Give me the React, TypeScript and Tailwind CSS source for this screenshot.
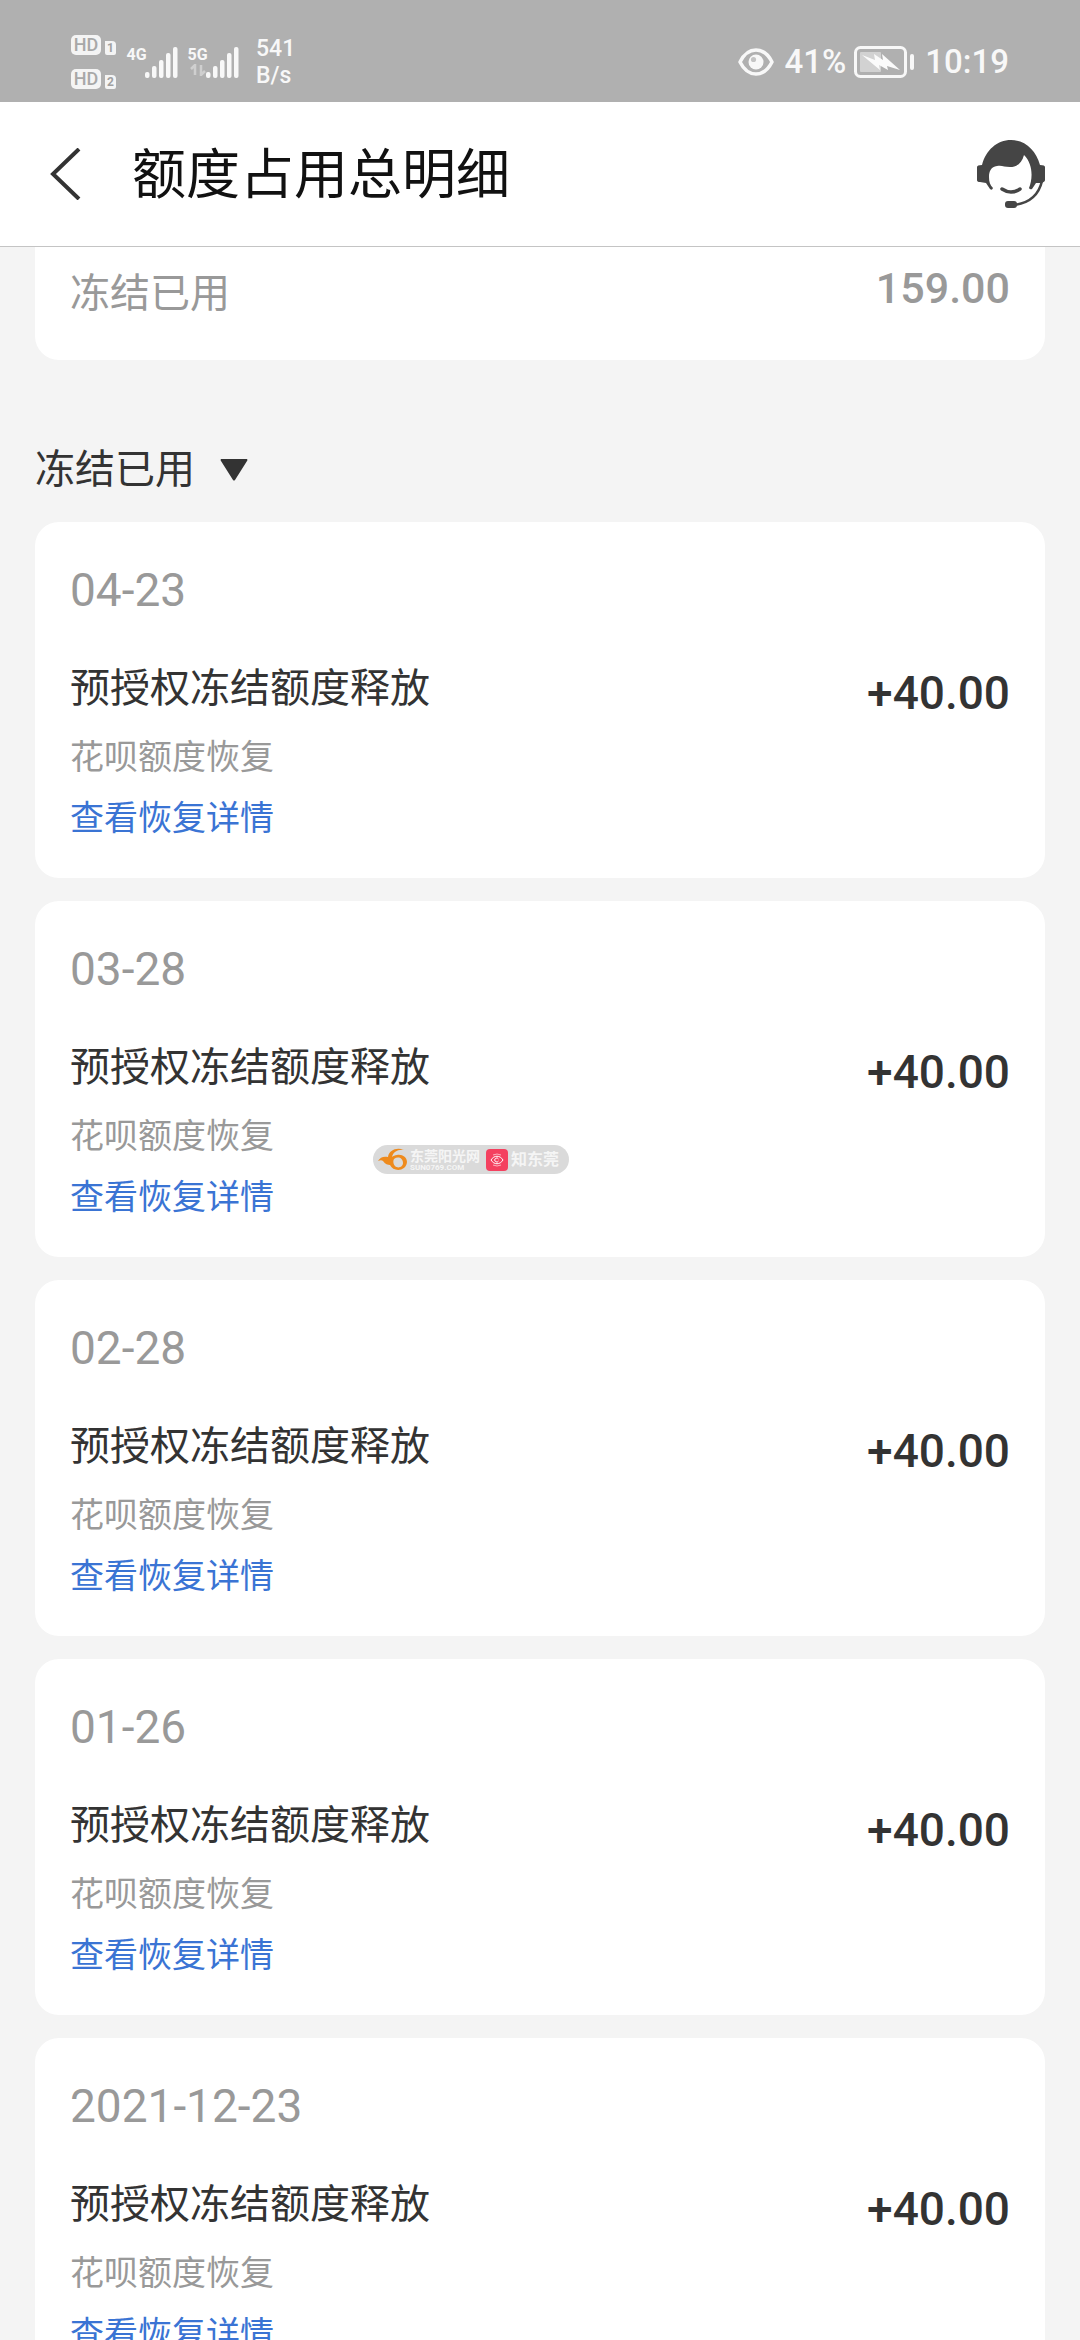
import { useState } from 'react';

type QuotaRecord = { date: string; title: string; note: string; amount: string };

const records: QuotaRecord[] = [
  { date: '04-23', title: '预授权冻结额度释放', note: '花呗额度恢复', amount: '+40.00' },
  { date: '03-28', title: '预授权冻结额度释放', note: '花呗额度恢复', amount: '+40.00' },
  { date: '02-28', title: '预授权冻结额度释放', note: '花呗额度恢复', amount: '+40.00' },
  { date: '01-26', title: '预授权冻结额度释放', note: '花呗额度恢复', amount: '+40.00' },
  { date: '2021-12-23', title: '预授权冻结额度释放', note: '花呗额度恢复', amount: '+40.00' },
];

function HdBadge({ sim }: { sim: string }) {
  return (
    <div className="flex items-end gap-1">
      <span className="flex h-5 w-[30px] items-center justify-center rounded-[5px] bg-[#f4f4f4] text-[18px] leading-5 font-medium text-[#a8a8a8]">
        HD
      </span>
      <span className="flex h-[14px] w-[11px] items-center justify-center rounded-tr-[4px] rounded-b-[2px] bg-[#f4f4f4] text-[12px] leading-[14px] font-bold text-[#a0a0a0]">
        {sim}
      </span>
    </div>
  );
}

function Signal({ label, idle }: { label: string; idle?: boolean }) {
  return (
    <div className="flex h-8 items-start">
      <div className="flex w-[17px] flex-col items-center">
        <span className="text-[16px] leading-[18px] font-bold">{label}</span>
        {idle && (
          <svg className="h-3 w-4 opacity-40" viewBox="0 0 16 12" fill="none" stroke="#fff" strokeWidth="2.5">
            <path d="M1 5 5 1v10M11 1v10l4-4" />
          </svg>
        )}
      </div>
      <svg className="h-8 w-[34px]" viewBox="0 0 34 32" fill="#f8f8f8">
        <rect x="0" y="26" width="4.5" height="6" rx="2" />
        <rect x="7" y="20" width="4.5" height="12" rx="2" />
        <rect x="14" y="14" width="4.5" height="18" rx="2" />
        <rect x="21" y="7" width="4.5" height="25" rx="2" />
        <rect x="28" y="1" width="4.5" height="31" rx="2" />
      </svg>
    </div>
  );
}

function StatusBar() {
  return (
    <div className="flex h-[102px] shrink-0 items-center justify-between bg-[#b0b0b0] pt-[22px] pr-[71px] pl-[71px] text-[#f8f8f8]">
      <div className="flex items-center">
        <div className="flex flex-col gap-[14px]">
          <HdBadge sim="1" />
          <HdBadge sim="2" />
        </div>
        <div className="ml-3 flex gap-[10px]">
          <Signal label="4G" />
          <Signal label="5G" idle />
        </div>
        <div className="ml-4 text-[23px] leading-[27px] font-medium">
          <p>541</p>
          <p>B/s</p>
        </div>
      </div>

      <div className="flex items-center text-[33px] leading-10 font-medium">
        <svg className="mr-[10px] h-7 w-9" viewBox="0 0 36 28" fill="none">
          <path d="M2 14C6 6 12 2 18 2s12 4 16 12c-4 8-10 12-16 12S6 22 2 14Z" stroke="#f8f8f8" strokeWidth="3.5" strokeLinejoin="round" />
          <circle cx="18" cy="14" r="7.5" fill="#f8f8f8" />
          <circle cx="15.5" cy="11.5" r="2.6" fill="#c4c4c4" />
        </svg>
        <span>41%</span>
        <svg className="ml-2 mr-[10px] h-8 w-[61px]" viewBox="0 0 61 32" fill="none">
          <rect x="1.5" y="1.5" width="50" height="29" rx="5" stroke="#f8f8f8" strokeWidth="3" />
          <rect x="6" y="6" width="21" height="20" rx="1" fill="#d2d2d2" />
          <path d="M8 9 21 14 20 8 29 14 28 8 46 24 33 20 34 24 25 19 26 24Z" fill="#fbfbfb" />
          <rect x="56" y="8" width="4" height="16" rx="2" fill="#f8f8f8" />
        </svg>
        <span>10:19</span>
      </div>
    </div>
  );
}

function HeadsetIcon() {
  return (
    <svg className="size-[68px]" viewBox="0 0 68 68" fill="none">
      <path
        d="M0 27q0-2 5-2C9 10 20 0 34 0s25 10 29 25q5 0 5 2v13q0 2-4 3l-5 0-4 6q-2 1-3-1c4-10 4-24-5-33-2 8-7 12-14 12-6 0-8-2-13-1-6 1-8 5-8 11 0 5 1 8 4 11q-1 3-3 1l-4-6-6-1q-3 0-3-2V27Z"
        fill="#454545"
      />
      <path d="M25 49q9 6 18 0" stroke="#454545" strokeWidth="3.5" strokeLinecap="round" />
      <path d="M65 41C62 54 53 63 37 65" stroke="#454545" strokeWidth="2.5" />
      <rect x="28" y="61" width="12" height="7" rx="3" fill="#454545" />
    </svg>
  );
}

function Watermark() {
  return (
    <div className="pointer-events-none absolute top-[1145px] left-[373px] flex h-[29px] items-center rounded-full bg-[#dadada] pr-[10px] pl-[5px] text-[#f5f5f5]">
      <svg className="h-6 w-[30px]" viewBox="0 0 30 24" fill="none">
        <path
          fillRule="evenodd"
          d="M26 2C19-1 11 2 10 9 6 8 2 9 0 13c2-1 4-1 5 0 2 3 5 4 7 4 3 7 16 7 17-3 0-5-5-8-10-7-2 0-4 1-5 2 1-5 6-8 12-7ZM16 11c4-3 9-1 9 4 0 4-5 6-8 3-2-2-2-5-1-7Z"
          fill="#ee8a1c"
        />
      </svg>
      <div className="ml-[2px] w-[70px]">
        <p className="text-[14px] leading-[16px] font-bold whitespace-nowrap">东莞阳光网</p>
        <p className="text-[8px] leading-[8px] font-bold whitespace-nowrap">SUN0769.COM</p>
      </div>
      <svg className="ml-[6px] size-[22px]" viewBox="0 0 22 22" fill="none" stroke="#fff">
        <rect width="22" height="22" rx="4" fill="#f4405f" stroke="none" />
        <path d="M5 11c3-5 9-5 12 0-3 5-9 5-12 0Z" />
        <path d="M12.500 10a2 2 0 1 0 0 2" />
        <path d="M7 6q4-2 8 0M7 16q4 2 8 0" strokeWidth=".6" />
      </svg>
      <span className="ml-[3px] text-[16px] leading-5 font-bold">知东莞</span>
    </div>
  );
}

function RecordCard({ record }: { record: QuotaRecord }) {
  return (
    <li className="rounded-3xl bg-white px-[35px] pt-[41px] pb-9">
      <p className="text-[46px] leading-[54px] text-[#999]">{record.date}</p>
      <div className="mt-[42px] flex items-start justify-between">
        <div>
          <h2 className="text-[40px] leading-[60px] text-[#333]">{record.title}</h2>
          <p className="mt-[14px] text-[34px] leading-[48px] text-[#999]">{record.note}</p>
          <a href="#detail" className="mt-[13px] block text-[34px] leading-[48px] text-[#3a74d4]">
            查看恢复详情
          </a>
        </div>
        <span className="text-[46px] leading-[68px] font-medium text-[#333]">{record.amount}</span>
      </div>
    </li>
  );
}

export default function App() {
  const [filter, setFilter] = useState('frozen');

  return (
    <div className="relative flex h-screen flex-col overflow-hidden bg-[#f4f4f4] font-['Roboto','Noto_Sans_CJK_SC',sans-serif]">
      <StatusBar />

      <header className="flex h-[145px] shrink-0 items-center border-b border-[#c4c4c4] bg-white pr-[35px] pl-[50px]">
        <button type="button" aria-label="返回">
          <svg className="h-[52px] w-8" viewBox="0 0 32 52" fill="none" stroke="#333" strokeWidth="4">
            <path d="M29 1 3 26l26 25" />
          </svg>
        </button>
        <h1 className="ml-[50px] flex-1 pt-1 text-[54px] leading-[72px] text-[#111]">额度占用总明细</h1>
        <button type="button" aria-label="客服">
          <HeadsetIcon />
        </button>
      </header>

      <main className="min-h-0 flex-1 overflow-hidden px-[35px]">
        <section className="flex h-[113px] items-start justify-between rounded-b-3xl bg-white px-[35px] pt-[11px] text-[#999]">
          <span className="pt-[6px] text-[40px] leading-[60px]">冻结已用</span>
          <span className="text-[43px] leading-[60px] font-medium">159.00</span>
        </section>

        <div className="mt-20 flex h-[60px] items-center gap-[25px]">
          <select
            aria-label="额度类型"
            value={filter}
            onChange={(e) => setFilter(e.target.value)}
            className="appearance-none bg-transparent text-[40px] leading-[60px] text-[#333]"
          >
            <option value="frozen">冻结已用</option>
          </select>
          <svg className="h-[22px] w-7" viewBox="0 0 28 22" fill="#333">
            <path d="M1 0h26q1 1 0 2L15 21q-1 1-2 0L1 2q-1-1 0-2Z" />
          </svg>
        </div>

        <ul className="mt-[22px] flex flex-col gap-[23px]">
          {records.map((record) => (
            <RecordCard key={record.date} record={record} />
          ))}
        </ul>
      </main>

      <Watermark />
    </div>
  );
}
